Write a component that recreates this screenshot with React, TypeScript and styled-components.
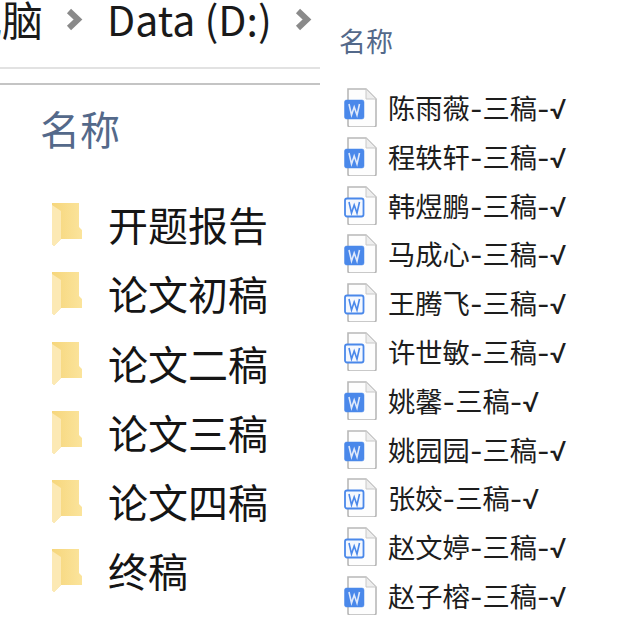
import React from "react";
import styled, { createGlobalStyle } from "styled-components";

const Global = createGlobalStyle`
  html, body { margin: 0; padding: 0; background: #fff; }
  body { width: 640px; height: 640px; overflow: hidden; font-family: "Noto Sans CJK SC", "Noto Sans", sans-serif; }
`;
const Page = styled.div`
  display: grid;
  grid-template-columns: 320px 320px;
  width: 640px;
  height: 640px;
  overflow: hidden;
`;
const LeftPanel = styled.section`
  display: flex;
  flex-direction: column;
  min-width: 0;
  overflow: hidden;
`;
const Breadcrumb = styled.nav`
  display: flex;
  align-items: center;
  height: 67px;
  margin-left: -39px;
  font-size: 41px;
  color: #1a1a1a;
  white-space: nowrap;
  padding-bottom: 31px;
  box-sizing: border-box;
`;
const Crumb = styled.span`
  line-height: 44px;
`;
const Separator = styled.span`
  display: flex;
  margin: 2px 24px 0 23px;
`;
const Rule = styled.div<{ $tone: string; $gap: number }>`
  height: 2px;
  background: ${p => p.$tone};
  margin-bottom: ${p => p.$gap}px;
`;
const LeftHeader = styled.div`
  font-size: 40px;
  line-height: 50px;
  color: #54698a;
  padding-left: 40px;
  margin-bottom: 42px;
  margin-top: -2px;
`;
const FolderList = styled.ul`
  list-style: none;
  margin: 0;
  padding: 0 0 0 51px;
  display: flex;
  flex-direction: column;
  gap: 11.3px;
`;
const FolderRow = styled.li`
  display: flex;
  align-items: center;
  gap: 23px;
  height: 58px;
  font-size: 40px;
  line-height: 60px;
  color: #151515;
  white-space: nowrap;
`;
const RightPanel = styled.section`
  display: flex;
  flex-direction: column;
  padding: 21px 0 0 19px;
`;
const RightHeader = styled.div`
  font-size: 27px;
  line-height: 40px;
  color: #54698a;
  margin-bottom: 26px;
`;
const FileList = styled.ul`
  list-style: none;
  margin: 0;
  padding: 0 0 0 5px;
  display: flex;
  flex-direction: column;
  gap: 8.8px;
`;
const FileRow = styled.li`
  display: flex;
  align-items: center;
  gap: 11px;
  height: 40px;
  font-family: Inter, "Noto Sans CJK SC", sans-serif;
  font-size: 27.3px;
  color: #1d1d1d;
  white-space: nowrap;
`;
const Glyph = styled.svg`
  flex: none;
  display: block;
`;

const Chevron = () => (
  <Glyph width="17" height="23" viewBox="0 0 17 23">
    <path d="M3 3 L12 11.5 L3 20" fill="none" stroke="#8a8a8a" strokeWidth="6" />
  </Glyph>
);

const Folder = () => (
  <Glyph width="34" height="46" viewBox="0 0 34 46">
    <defs>
      <linearGradient id="folderFront" x1="0" y1="0" x2="1" y2="0">
        <stop offset="0" stopColor="#f6d67c" />
        <stop offset="1" stopColor="#fbe49c" />
      </linearGradient>
    </defs>
    <path d="M1 2 H28 V26 L31 29 V38 H10 L3 45 L1 43 Z" fill="url(#folderFront)" />
    <path d="M1 4 L10 10 V38 L3 45 L1 43 Z" fill="#fce9b4" />
  </Glyph>
);

const DocIcon = ({ filled }: { filled: boolean }) => (
  <Glyph width="33" height="40" viewBox="0 0 33 40">
    <path d="M4 2 H22 L32 12 V38 Q32 40 30 40 H6 Q4 40 4 38 Z" fill="#fdfdfd" stroke="#b8b8b8" strokeWidth="1.6" />
    <path d="M22 2 V12 H32 Z" fill="#eeeeee" stroke="#c8c8c8" strokeWidth="1" />
    <rect
      x={filled ? 0.5 : 1}
      y={filled ? 13 : 13.5}
      width={filled ? 19.5 : 18.5}
      height={filled ? 19 : 18}
      rx="2"
      fill={filled ? "#4a88ea" : "#f5f8fe"}
      stroke="#4a88ea"
      strokeWidth={filled ? 0.5 : 1.8}
    />
    <path
      d="M5 17 L7.5 28 L10.2 20 L13 28 L15.5 17"
      fill="none"
      stroke={filled ? "#dfe9fb" : "#4a88ea"}
      strokeWidth="1.6"
    />
  </Glyph>
);

const folders = ["开题报告", "论文初稿", "论文二稿", "论文三稿", "论文四稿", "终稿"];
const files: [string, boolean][] = [
  ["陈雨薇-三稿-√", true],
  ["程轶轩-三稿-√", true],
  ["韩煜鹏-三稿-√", false],
  ["马成心-三稿-√", true],
  ["王腾飞-三稿-√", false],
  ["许世敏-三稿-√", false],
  ["姚馨-三稿-√", true],
  ["姚园园-三稿-√", true],
  ["张姣-三稿-√", false],
  ["赵文婷-三稿-√", false],
  ["赵子榕-三稿-√", true],
];

export default function App() {
  return (
    <Page>
      <Global />
      <LeftPanel>
        <Breadcrumb>
          <Crumb>电脑</Crumb>
          <Separator><Chevron /></Separator>
          <Crumb>Data (D:)</Crumb>
          <Separator><Chevron /></Separator>
        </Breadcrumb>
        <Rule $tone="#e2e2e2" $gap={14} />
        <Rule $tone="#c4c4c4" $gap={20} />
        <LeftHeader>名称</LeftHeader>
        <FolderList>
          {folders.map(f => (
            <FolderRow key={f}><Folder /><span>{f}</span></FolderRow>
          ))}
        </FolderList>
      </LeftPanel>
      <RightPanel>
        <RightHeader>名称</RightHeader>
        <FileList>
          {files.map(([name, filled]) => (
            <FileRow key={name}><DocIcon filled={filled} />{name}</FileRow>
          ))}
        </FileList>
      </RightPanel>
    </Page>
  );
}
